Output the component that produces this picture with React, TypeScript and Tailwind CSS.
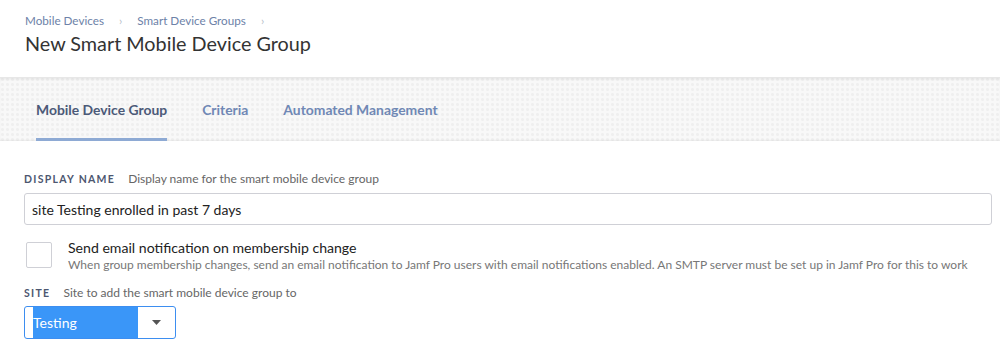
import { useState } from "react";

const tabs = ["Mobile Device Group", "Criteria", "Automated Management"];

export default function App() {
  const [active, setActive] = useState(0);
  const [notify, setNotify] = useState(false);
  const [name, setName] = useState("site Testing enrolled in past 7 days");

  return (
    <div className="w-[1000px] h-[358px] bg-white overflow-hidden font-['Lato',sans-serif] text-[#222]">
      {/* header */}
      <div className="px-[25px] pt-[12px] h-[77px]">
        <div className="flex items-center text-[11.7px] text-[#6d82a8]">
          <span>Mobile Devices</span>
          <span className="mx-[15px] text-[#b8bec8]">›</span>
          <span>Smart Device Groups</span>
          <span className="mx-[15px] text-[#b8bec8]">›</span>
        </div>
        <h1 className="mt-[1px] text-[19.8px] leading-[24px] text-[#333]">
          New Smart Mobile Device Group
        </h1>
      </div>

      {/* tab bar */}
      <div className="h-[64px] bg-[#f8f8f8] bg-[radial-gradient(circle,#efefef_1.2px,transparent_1.8px)] bg-[length:5px_5px] shadow-[inset_0_3px_3px_-1px_rgba(0,0,0,0.08),inset_0_-2px_2px_-1px_rgba(0,0,0,0.06)] flex px-[36px] gap-[35px]">
        {tabs.map((t, i) => (
          <button
            key={t}
            onClick={() => setActive(i)}
            className={
              "h-full flex items-center pt-[5px] text-[13.9px] font-bold border-b-[3px] " +
              (i === active
                ? "text-[#4c5a78] border-[#8eaad4]"
                : "text-[#7088b5] border-transparent")
            }
          >
            {t}
          </button>
        ))}
      </div>

      {/* form */}
      <div className="px-[24px] pt-[29px]">
        <div className="flex items-baseline">
          <span className="text-[10.5px] font-bold tracking-[1.3px] text-[#4d5770]">DISPLAY NAME</span>
          <span className="ml-[13px] text-[12px] text-[#666]">
            Display name for the smart mobile device group
          </span>
        </div>
        <input
          value={name}
          onChange={(e) => setName(e.target.value)}
          className="mt-[5px] w-[968px] h-[32px] border border-[#cfd0d6] rounded-[3px] px-[7px] text-[14px] text-[#222] outline-none"
        />

        <div className="mt-[17px] flex">
          <button
            onClick={() => setNotify(!notify)}
            className="ml-[2px] w-[26px] h-[26px] border border-[#cfd0d6] rounded-[2px] bg-white shrink-0"
          >
            {notify ? "✓" : ""}
          </button>
          <div className="ml-[16px] -mt-[3px]">
            <div className="text-[14.1px] leading-[18px] text-[#222]">
              Send email notification on membership change
            </div>
            <div className="text-[12px] leading-[15px] text-[#777]">
              When group membership changes, send an email notification to Jamf Pro users with email notifications enabled. An SMTP server must be set up in Jamf Pro for this to work
            </div>
          </div>
        </div>

        <div className="mt-[12px] flex items-baseline">
          <span className="text-[10.5px] font-bold tracking-[1.3px] text-[#4d5770]">SITE</span>
          <span className="ml-[13px] text-[12px] text-[#666]">
            Site to add the smart mobile device group to
          </span>
        </div>
        <div className="mt-[4px] w-[152px] h-[33px] border border-[#3d8ef0] rounded-[3px] flex items-center pl-[8px] pr-[14px]">
          <span className="w-[105px] h-[31px] bg-[#3a96f8] text-white text-[14px] flex items-center">
            Testing
          </span>
          <svg className="ml-auto" width="9" height="5" viewBox="0 0 9 5">
            <path d="M0 0h9L4.5 5z" fill="#555" />
          </svg>
        </div>
      </div>
    </div>
  );
}
